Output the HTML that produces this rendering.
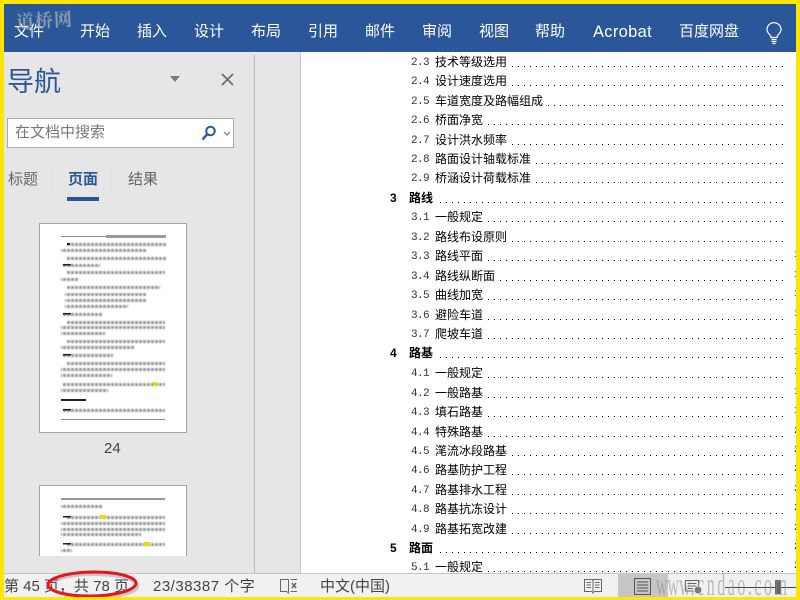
<!DOCTYPE html>
<html lang="zh">
<head>
<meta charset="utf-8">
<title>Word</title>
<style>
html,body{margin:0;padding:0;width:800px;height:600px;overflow:hidden;background:#fff}
body{position:relative;font-family:"Liberation Sans","Noto Sans CJK SC",sans-serif}
.a{position:absolute;white-space:nowrap}
#frame{position:absolute;left:0;top:0;width:800px;height:600px;box-sizing:border-box;border:solid #ffe600;border-width:4px 4px 3px 4px;z-index:20;pointer-events:none}
#ribbon{left:0;top:0;width:800px;height:52px;background:#2b579a}
.m{position:absolute;top:21px;font-size:15px;line-height:22px;color:#fff;white-space:nowrap}
#nav{left:0;top:52px;width:254px;height:522px;background:#e6e6e6}
#gap{left:255px;top:52px;width:45px;height:522px;background:#e6e6e6}
.r{position:absolute;left:386px;width:401px;height:20px;font:12px/20px "WenQuanYi Zen Hei","Noto Sans CJK SC",sans-serif;color:#000;
background:repeating-linear-gradient(90deg,#000 0 1px,transparent 1px 6px) 0 14px/100% 1px no-repeat}
.r b,.r i{position:absolute;top:0;font-style:normal;background:#fff;padding-right:4px;height:20px}
.r i.n{left:0;width:45px;padding:2px 0 0 25px;height:18px;box-sizing:content-box;font:11px/18px "Liberation Mono",monospace;letter-spacing:-.6px;color:#333}
.r i.t{left:49px}
.r b.n{left:0;width:19px;padding:0 0 0 4px;font:bold 12px/20px "Liberation Sans",sans-serif;color:#000}
.r b.t{left:23px;font-weight:700;color:#000}
.p{position:absolute;left:794px;width:6px;font:10px/20px "Liberation Mono",monospace;color:#333}
#status{left:0;top:573px;width:800px;height:27px;background:#f1f1f1;border-top:1px solid #c6c6c6;box-sizing:border-box}
.s{position:absolute;top:577px;font-size:15px;line-height:20px;color:#444;white-space:nowrap}
</style>
</head>
<body>
<div class="a" id="ribbon"></div>
<div class="m" style="left:14px">文件</div>
<div class="m" style="left:80px">开始</div>
<div class="m" style="left:137px">插入</div>
<div class="m" style="left:194px">设计</div>
<div class="m" style="left:251px">布局</div>
<div class="m" style="left:308px">引用</div>
<div class="m" style="left:365px">邮件</div>
<div class="m" style="left:422px">审阅</div>
<div class="m" style="left:479px">视图</div>
<div class="m" style="left:535px">帮助</div>
<div class="m" style="left:593px;font-size:16.500px;letter-spacing:.3px">Acrobat</div>
<div class="m" style="left:679px">百度网盘</div>
<svg class="a" style="left:765px;top:22px" width="18" height="23" viewBox="0 0 18 23" fill="none" stroke="#fff" stroke-width="1.2"><path d="M6 15.5C6 12.5 2 11.5 2 7.500A7 6.800 0 0 1 16 7.500C16 11.500 12 12.500 12 15.500Z"/><path d="M6.500 17.500H11.500M6.500 19.500H11.500M7.500 21.500H10.500"/></svg>
<div class="a" style="left:16px;top:8px;font:bold 18px/25px 'Noto Serif CJK SC',serif;color:#a8abb0;opacity:.8;letter-spacing:1px;transform:rotate(-3deg);filter:blur(.3px);z-index:5">道桥网</div>

<div class="a" id="nav"></div>
<div class="a" id="gap"></div>
<div class="a" style="left:254px;top:54px;width:1px;height:520px;background:#bdbdbd"></div>
<div class="a" style="left:300px;top:52px;width:1px;height:521px;background:#c6c6c6"></div>

<div class="a" style="left:7px;top:62px;font-size:27px;line-height:40px;color:#2b579a">导航</div>
<div class="a" style="left:170px;top:76px;width:0;height:0;border-left:5.500px solid transparent;border-right:5.500px solid transparent;border-top:6px solid #7a7a7a"></div>
<svg class="a" style="left:221px;top:73px" width="13" height="13" viewBox="0 0 13 13" stroke="#6e6e6e" stroke-width="1.800" fill="none"><path d="M1 1L12 12M12 1L1 12"/></svg>
<div class="a" style="left:7px;top:118px;width:227px;height:30px;background:#fff;border:1px solid #ababab;box-sizing:border-box"></div>
<div class="a" style="left:15px;top:122px;font-size:15px;line-height:22px;color:#777">在文档中搜索</div>
<svg class="a" style="left:201px;top:125px" width="16" height="16" viewBox="0 0 16 16" fill="none" stroke="#2b579a" stroke-width="2"><circle cx="9.500" cy="6" r="4.300"/><path d="M6.300 9.200L1.500 14.500" stroke-width="2.400"/></svg>
<svg class="a" style="left:223px;top:131px" width="8" height="5" viewBox="0 0 8 5" fill="none" stroke="#666"><path d="M1 1L4 4L7 1"/></svg>

<div class="a" style="left:8px;top:169px;font-size:15px;line-height:21px;color:#666">标题</div>
<div class="a" style="left:68px;top:169px;font-size:15px;line-height:21px;color:#2b579a;font-weight:700">页面</div>
<div class="a" style="left:128px;top:169px;font-size:15px;line-height:21px;color:#666">结果</div>
<div class="a" style="left:67px;top:197px;width:32px;height:4px;background:#2b579a"></div>
<div class="a" style="left:52px;top:167px;width:1px;height:26px;background:#e0e0e0"></div>
<div class="a" style="left:111px;top:167px;width:1px;height:26px;background:#e0e0e0"></div>

<svg class="a" style="left:39px;top:223px" width="149" height="211" viewBox="0 0 149 211">
<defs>
<pattern id="tx" width="4" height="3" patternUnits="userSpaceOnUse"><rect width="3" height="3" fill="#9a9a9a"/></pattern>
<filter id="bl" x="-2%" y="-2%" width="104%" height="104%"><feGaussianBlur stdDeviation=".6"/></filter>
</defs>
<rect x=".5" y=".5" width="147" height="209" fill="#fff" stroke="#a0a4ab"/>
<g fill="url(#tx)" filter="url(#bl)">
<rect x="28" y="20" width="99" height="3"/><rect x="22" y="26" width="86" height="3"/>
<rect x="28" y="34" width="99" height="3"/><rect x="24" y="41" width="37" height="3"/>
<rect x="28" y="48" width="98" height="3"/><rect x="22" y="55" width="17" height="3"/>
<rect x="28" y="63" width="93" height="3"/><rect x="26" y="70" width="82" height="3"/><rect x="26" y="76" width="82" height="3"/><rect x="26" y="82" width="63" height="3"/>
<rect x="24" y="90" width="40" height="3"/>
<rect x="28" y="98" width="98" height="3"/><rect x="22" y="103" width="104" height="3"/><rect x="22" y="109" width="44" height="3"/>
<rect x="28" y="117" width="98" height="3"/><rect x="22" y="123" width="74" height="3"/>
<rect x="24" y="131" width="50" height="3"/>
<rect x="28" y="139" width="98" height="3"/><rect x="22" y="145" width="104" height="3"/><rect x="22" y="151" width="51" height="3"/>
<rect x="24" y="160" width="102" height="3"/><rect x="22" y="166" width="47" height="3"/>
<rect x="24" y="186" width="102" height="3"/>
</g>
<rect x="22" y="13" width="45" height="1" fill="#888"/><rect x="67" y="12" width="60" height="3" fill="#999"/>
<g fill="#222"><rect x="28" y="20" width="3" height="2"/><rect x="24" y="41" width="8" height="1.500"/><rect x="24" y="90" width="8" height="1.500"/><rect x="24" y="131" width="8" height="1.500"/><rect x="24" y="186" width="8" height="1.500"/><rect x="22" y="176" width="25" height="2"/></g>
<rect x="114" y="159" width="4" height="4" fill="#e6e000"/>
<rect x="22" y="196" width="104" height="1" fill="#888"/>
</svg>
<div class="a" style="left:104px;top:440px;font-size:15px;line-height:18px;color:#444">24</div>

<div class="a" style="left:39px;top:485px;width:148px;height:71px;background:#fff;border:1px solid #a0a4ab;border-bottom:0;box-sizing:border-box"></div>
<svg class="a" style="left:39px;top:485px" width="148" height="71" viewBox="0 0 148 71">
<rect x="22" y="13" width="104" height="2" fill="#999"/>
<g fill="url(#tx)" filter="url(#bl)"><rect x="22" y="20" width="41" height="3"/>
<rect x="28" y="31" width="98" height="3"/><rect x="22" y="37" width="104" height="3"/><rect x="22" y="43" width="104" height="3"/><rect x="22" y="48" width="80" height="3"/><rect x="28" y="58" width="98" height="3"/><rect x="22" y="64" width="11" height="3"/></g>
<rect x="61" y="30" width="6" height="4" fill="#e6e000"/><rect x="105" y="57" width="6" height="4" fill="#e6e000"/><rect x="24" y="31" width="8" height="1.500" fill="#222"/><rect x="24" y="58" width="8" height="1.500" fill="#222"/>
</svg>

<div class="r" style="top:52px"><i class="n">2.3</i><i class="t">技术等级选用</i></div>
<div class="r" style="top:71px"><i class="n">2.4</i><i class="t">设计速度选用</i></div>
<div class="r" style="top:91px"><i class="n">2.5</i><i class="t">车道宽度及路幅组成</i></div>
<div class="r" style="top:110px"><i class="n">2.6</i><i class="t">桥面净宽</i></div>
<div class="r" style="top:130px"><i class="n">2.7</i><i class="t">设计洪水频率</i></div>
<div class="r" style="top:149px"><i class="n">2.8</i><i class="t">路面设计轴载标准</i></div>
<div class="r" style="top:168px"><i class="n">2.9</i><i class="t">桥涵设计荷载标准</i></div>
<div class="r" style="top:188px"><b class="n">3</b><b class="t">路线</b></div>
<div class="r" style="top:207px"><i class="n">3.1</i><i class="t">一般规定</i></div>
<div class="r" style="top:227px"><i class="n">3.2</i><i class="t">路线布设原则</i></div>
<div class="r" style="top:246px"><i class="n">3.3</i><i class="t">路线平面</i></div>
<div class="r" style="top:266px"><i class="n">3.4</i><i class="t">路线纵断面</i></div>
<div class="r" style="top:285px"><i class="n">3.5</i><i class="t">曲线加宽</i></div>
<div class="r" style="top:305px"><i class="n">3.6</i><i class="t">避险车道</i></div>
<div class="r" style="top:324px"><i class="n">3.7</i><i class="t">爬坡车道</i></div>
<div class="r" style="top:343px"><b class="n">4</b><b class="t">路基</b></div>
<div class="r" style="top:363px"><i class="n">4.1</i><i class="t">一般规定</i></div>
<div class="r" style="top:383px"><i class="n">4.2</i><i class="t">一般路基</i></div>
<div class="r" style="top:402px"><i class="n">4.3</i><i class="t">填石路基</i></div>
<div class="r" style="top:422px"><i class="n">4.4</i><i class="t">特殊路基</i></div>
<div class="r" style="top:441px"><i class="n">4.5</i><i class="t">滗流冰段路基</i></div>
<div class="r" style="top:460px"><i class="n">4.6</i><i class="t">路基防护工程</i></div>
<div class="r" style="top:480px"><i class="n">4.7</i><i class="t">路基排水工程</i></div>
<div class="r" style="top:499px"><i class="n">4.8</i><i class="t">路基抗冻设计</i></div>
<div class="r" style="top:519px"><i class="n">4.9</i><i class="t">路基拓宽改建</i></div>
<div class="r" style="top:538px"><b class="n">5</b><b class="t">路面</b></div>
<div class="r" style="top:557px"><i class="n">5.1</i><i class="t">一般规定</i></div>

<div class="p" style="top:246px">1</div><div class="p" style="top:266px">1</div><div class="p" style="top:285px">1</div><div class="p" style="top:305px">1</div><div class="p" style="top:324px">1</div><div class="p" style="top:343px">1</div><div class="p" style="top:363px">1</div><div class="p" style="top:383px">1</div><div class="p" style="top:402px">1</div>
<div class="p" style="top:422px">2</div><div class="p" style="top:441px">2</div><div class="p" style="top:460px">2</div><div class="p" style="top:480px">2</div><div class="p" style="top:499px">2</div><div class="p" style="top:519px">2</div><div class="p" style="top:538px">2</div><div class="p" style="top:557px">2</div>

<div class="a" id="status"></div>
<div class="s" style="left:4px">第 45 页，共 78 页</div>
<div class="s" style="left:153px;letter-spacing:.5px">23/38387 个字</div>
<svg class="a" style="left:279px;top:578px" width="19" height="16" viewBox="0 0 19 16" fill="none" stroke="#666"><path d="M9.500 1.500H1.500V13.500H7.500L9.500 15V1.500M11.500 1.500H18M11.500 13.500H18"/><path d="M13 5L17 10M17 5L13 10" stroke-width="1.500"/></svg>
<div class="s" style="left:320px">中文(中国)</div>
<svg class="a" style="left:584px;top:578px" width="18" height="16" viewBox="0 0 18 16" fill="none" stroke="#666"><path d="M.5 1.500H8.500L9 2.500L9.500 1.500H17.500V13.500H10L9 15L8 13.500H.5ZM9 2.500V13M2.500 4.500H7M2.500 7H7M2.500 9.500H7M11 4.500H15.500M11 7H15.500M11 9.500H15.500"/></svg>
<div class="a" style="left:618px;top:574px;width:50px;height:23px;background:#c6c6c6"></div>
<svg class="a" style="left:634px;top:578px" width="17" height="17" viewBox="0 0 17 17" fill="none" stroke="#555"><path d="M.5 .5H16.500V16.500H.5ZM3 4H14M3 7H14M3 10H14M3 13H14"/></svg>
<svg class="a" style="left:685px;top:580px" width="18" height="15" viewBox="0 0 18 15" fill="none" stroke="#666"><path d="M.5 .5H13.500V11H.5ZM2.500 3.500H11.500M2.500 6H11.500M2.500 8.500H8"/><circle cx="13" cy="10" r="4" fill="#777" stroke="#f1f1f1"/></svg>
<div class="a" style="left:725px;top:587px;width:71px;height:1px;background:#444"></div>
<div class="a" style="left:775px;top:580px;width:6px;height:14px;background:#666"></div>
<div class="a" style="left:656px;top:566px;font:32px/36px 'Liberation Serif',serif;color:#8a8a8a;opacity:.55;transform-origin:0 50%;transform:scaleX(.5);z-index:6">www<span style="letter-spacing:5px">.cndao.com</span></div>

<svg class="a" style="left:40px;top:565px;z-index:8" width="110" height="35" viewBox="0 0 110 35" fill="none">
<ellipse cx="54" cy="21" rx="44" ry="11.500" stroke="#777" stroke-width="3" opacity=".35"/>
<ellipse cx="52" cy="19" rx="44" ry="12" stroke="#e8141c" stroke-width="3" transform="rotate(-1 52 19)"/>
</svg>
<div id="frame"></div>
</body>
</html>
